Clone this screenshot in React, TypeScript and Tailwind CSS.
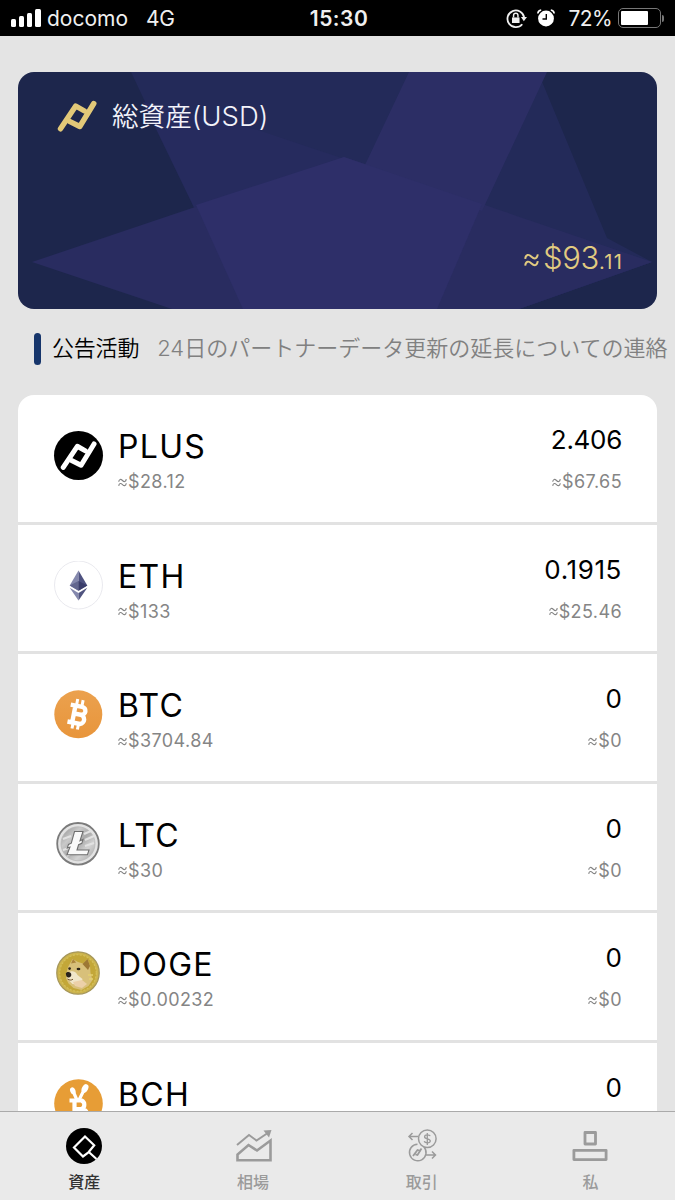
import type { ReactNode } from 'react';

function PlusMark({ className }: { className?: string }) {
  return (
    <svg viewBox="0 0 40 32" className={className} fill="none" stroke="currentColor" strokeWidth="5.4" strokeLinecap="round" strokeLinejoin="round">
      <path d="M3.500 28.300 18.700 5.500 27.500 10.500" />
      <path d="M36.800 3 22.800 26 12.500 20.800" />
    </svg>
  );
}

function PlusIcon() {
  return (
    <div className="w-[49px] h-[49px] rounded-full bg-black text-white flex items-center justify-center">
      <PlusMark className="w-[37px] h-[30px]" />
    </div>
  );
}

function EthIcon() {
  return (
    <svg viewBox="0 0 49 49" className="w-[49px] h-[49px]">
      <circle cx="24.5" cy="24" r="24" fill="#fff" stroke="#e3e3ea" strokeWidth="0.8" />
      <path d="M24.500 9.500 15.700 24.500l8.800 5.200z" fill="#8488ad" />
      <path d="M24.500 9.500 33.300 24.500l-8.800 5.200z" fill="#4e5280" />
      <path d="M24.500 20 15.700 24.500l8.800 5.200z" fill="#62668f" />
      <path d="M24.500 20 33.300 24.500l-8.800 5.200z" fill="#3a3d6b" />
      <path d="m15.700 26.700 8.800 5.200v7.600z" fill="#8488ad" />
      <path d="m33.300 26.700-8.800 5.200v7.600z" fill="#50547f" />
    </svg>
  );
}

function BtcIcon() {
  return (
    <svg viewBox="0 0 49 49" className="w-[49px] h-[49px]">
      <defs>
        <linearGradient id="btc" x1="0" y1="0" x2="0" y2="1">
          <stop offset="0" stopColor="#eba14e" />
          <stop offset="1" stopColor="#e8953b" />
        </linearGradient>
      </defs>
      <circle cx="24.300" cy="24.300" r="24" fill="url(#btc)" />
      <g transform="rotate(11 24.500 24.500)" fill="none" stroke="#fff">
        <path d="M15 16.300h11.700a4 4 0 0 1 0 8H19.500M26.500 24.300a4.700 4.700 0 0 1 1.200 9.200H15M19.800 16.300v17.200" strokeWidth="4.400" />
        <path d="M20.800 9.500v6M26.300 9.500v6M20.800 33.500v6M26.300 33.500v6" strokeWidth="3" />
      </g>
    </svg>
  );
}

function LtcIcon() {
  return (
    <svg viewBox="0 0 49 49" className="w-[49px] h-[49px]">
      <defs>
        <linearGradient id="ltc" x1="0" y1="0" x2="1" y2="1">
          <stop offset="0" stopColor="#8f8f8f" />
          <stop offset="0.3" stopColor="#c9c9c9" />
          <stop offset="0.5" stopColor="#a9a9a9" />
          <stop offset="0.7" stopColor="#d2d2d2" />
          <stop offset="1" stopColor="#a2a2a2" />
        </linearGradient>
      </defs>
      <circle cx="24" cy="23.800" r="20.800" fill="#e3e3e3" stroke="#7b7b7b" strokeWidth="1.800" />
      <circle cx="24" cy="23.800" r="17" fill="url(#ltc)" stroke="#b9b9b9" strokeWidth="0.800" />
      <path d="m30 14 7-3M31 20l9-4M31 26l9-3M9 19l8-3M9 30l6-2M13 36l5-3" stroke="#e2e2e2" strokeWidth="2" />
      <path d="M20.500 11.500h8.500l-3 9.200 3-1.200-1.200 3.800-3.200 1.400-1.600 5.300h12l-1.600 4.800H13l2.900-7.700-2.600 1 1.200-3.700 2.800-1.200z" fill="#f9f9f9" stroke="#6e6e6e" strokeWidth="1.100" />
    </svg>
  );
}

function DogeIcon() {
  return (
    <svg viewBox="0 0 49 49" className="w-[49px] h-[49px]">
      <circle cx="24" cy="24" r="21.200" fill="#cdb44c" stroke="#a6975a" strokeWidth="1.300" />
      <circle cx="24" cy="24" r="18.300" fill="#c3a738" stroke="#d4c05c" strokeWidth="1.200" strokeDasharray="2 1.500" />
      <path d="M14 18 18.500 10l5.500 3 5 1.500 4.500-4.500 2.500 7 .5 7 2 7-4 6-7 4-8-2-5-4.500-2.500-5 .5-6z" fill="#d8c07a" />
      <path d="m28.500 15 5-5 2.500 7-2 4z" fill="#9d7834" />
      <path d="m17 14.500 2-4.500 3.200 3.500z" fill="#ac863d" />
      <path d="M14 24c3-3 8-2 9.500 2l5 4-2 6-8-1-5-5z" fill="#f0e6c9" />
      <path d="m19 33 9-2 5 4-5 4-7-2z" fill="#ecd0a8" />
      <path d="M11.800 24.500c1.500-2.500 5.800-1.500 5.500 1.600-.2 3-3.800 3.200-5 1z" fill="#28221b" />
      <path d="M13.500 30c2 1.500 4 1.300 5.500.2" stroke="#72542d" fill="none" />
      <circle cx="15.600" cy="19.600" r="1.300" fill="#2e261a" />
      <ellipse cx="24.500" cy="20" rx="1.900" ry="1.300" fill="#2e261a" />
      <path d="M34 26h5M35 30h4" stroke="#e3d070" strokeWidth="1.400" />
    </svg>
  );
}

function BchIcon() {
  return (
    <svg viewBox="0 0 49 49" className="w-[49px] h-[49px]">
      <circle cx="24.500" cy="24.500" r="24.300" fill="#e79d36" />
      <path d="m22.500 20-3.500-8M25.500 20l5-10" stroke="#fff" strokeWidth="3.200" strokeLinecap="round" />
      <ellipse cx="18.800" cy="11.800" rx="2.600" ry="3.600" fill="#fff" transform="rotate(-22 18.800 11.800)" />
      <ellipse cx="31" cy="9.500" rx="3" ry="4.600" fill="#fff" transform="rotate(28 31 9.500)" />
      <path d="M15.500 21.500h12a4.600 4.600 0 0 1 0 8.500h-7M28 30a4.800 4.800 0 0 1 0 9.600H16M20.500 21.500v18" stroke="#fff" strokeWidth="4.200" fill="none" />
    </svg>
  );
}

type Coin = { name: string; amount: string; price?: string; value?: string; tracking?: string; icon: ReactNode };

const coins: Coin[] = [
  { name: 'PLUS', price: '$28.12', amount: '2.406', value: '$67.65', tracking: 'tracking-[-0.3px]', icon: <PlusIcon /> },
  { name: 'ETH', price: '$133', amount: '0.1915', value: '$25.46', tracking: 'tracking-[0.6px]', icon: <EthIcon /> },
  { name: 'BTC', price: '$3704.84', amount: '0', value: '$0', icon: <BtcIcon /> },
  { name: 'LTC', price: '$30', amount: '0', value: '$0', icon: <LtcIcon /> },
  { name: 'DOGE', price: '$0.00232', amount: '0', value: '$0', icon: <DogeIcon /> },
  { name: 'BCH', amount: '0', icon: <BchIcon /> },
];

const tabs = [
  {
    label: '資産',
    color: 'text-[#333333]',
    icon: (
      <svg viewBox="0 0 36 36" className="w-9 h-9">
        <circle cx="18" cy="18" r="18" fill="#000" />
        <path d="M30.500 31 22.500 23.800M22.800 24.200 17 28.500 8 19.500 19 8.500l9.200 8.800-5.700 6.900" fill="none" stroke="#fff" strokeWidth="2.200" />
      </svg>
    ),
  },
  {
    label: '相場',
    color: 'text-[#9b9b9b]',
    icon: (
      <svg viewBox="0 0 36 36" className="w-9 h-9 relative left-px" fill="none" stroke="currentColor">
        <path d="M1 17 13 7 20.500 12.500 32.500 4.500" strokeWidth="2" />
        <path d="m27.500 2.500 8-.5-2.500 7.500z" fill="currentColor" stroke="none" />
        <path d="M1.500 32.300V26.500L12.500 17l8.500 5.500L34.500 12.500v19.800z" strokeWidth="2.600" />
      </svg>
    ),
  },
  {
    label: '取引',
    color: 'text-[#9b9b9b]',
    icon: (
      <svg viewBox="0 0 36 36" className="w-9 h-9" fill="none" stroke="currentColor" strokeWidth="1.500">
        <circle cx="23.300" cy="10.800" r="8.800" />
        <path d="M14.500 8.500H5.500M8.500 5 5 8.500l3.500 3.500M13.500 16.200A8.300 8.300 0 1 0 20 19M21.500 27H31M28 23.500l3.500 3.500-3.500 3.500" />
        <path d="m9 28 4.500-6 3.500 1M17.500 20.500 13.500 27l-2-.7" strokeWidth="1.800" />
        <path d="M26.200 8.200c-.4-1.500-5.300-2-5.600.5-.2 2.800 5.800 1.500 5.700 4.300-.2 2.600-5.600 2.200-6 .2M23.300 5v12" strokeWidth="1.300" />
      </svg>
    ),
  },
  {
    label: '私',
    color: 'text-[#9b9b9b]',
    icon: (
      <svg viewBox="0 0 36 36" className="w-9 h-9 relative -left-px" fill="none" stroke="currentColor" strokeWidth="2.800" strokeLinejoin="round">
        <path d="M13 4.500h10.500v11.500H13zM1.900 22.300h32.200v9.300H1.900z" />
      </svg>
    ),
  },
];

// Drawn narrower and smaller than the digits that follow it
function Approx({ className = '' }: { className?: string }) {
  return (
    <svg viewBox="0 0 10 9" className={`inline-block ${className}`} fill="none" stroke="currentColor" strokeWidth="1.300">
      <path d="M.8 3.700C1.200.5 3.200.5 5 2.300s3.700 1.700 4.200-1.500M.8 8.200C1.200 5 3.200 5 5 6.800s3.700 1.700 4.200-1.500" />
    </svg>
  );
}

function StatusBar() {
  return (
    <header className="h-9 shrink-0 bg-black text-[#f0f0f0] grid grid-cols-[1fr_auto_1fr] items-center pl-[11px] pr-[11px] text-[21px] leading-none">
      <div className="flex items-center">
        <div className="flex items-end gap-[3px] h-[18px] mr-[6px]">
          <i className="w-[5px] h-2 rounded-[1.5px] bg-white" />
          <i className="w-[5px] h-[11px] rounded-[1.5px] bg-white" />
          <i className="w-[5px] h-[14px] rounded-[1.5px] bg-white" />
          <i className="w-[6px] h-[18px] rounded-[1.5px] bg-white" />
        </div>
        <span>docomo</span>
        <span className="ml-[18px] tracking-[-0.3px]">4G</span>
      </div>
      <span className="pl-[3px] font-semibold tracking-[0.5px]">15:30</span>
      <div className="flex items-center justify-end">
        <svg viewBox="0 0 20 20" className="w-[21px] h-[21px] mr-[10px]" fill="none" stroke="currentColor" strokeWidth="1.700">
          <path d="M15.500 15.500A8 8 0 1 1 17.300 9" />
          <path d="m14.200 8.500 5.800 0-3 4z" fill="currentColor" stroke="none" />
          <path d="M5.700 9h7.200v5.300H5.700z" fill="currentColor" stroke="none" />
          <path d="M7.200 9V7.200a2.100 2.100 0 0 1 4.200 0V9" strokeWidth="1.400" />
        </svg>
        <svg viewBox="0 0 18 18" className="w-[18px] h-[18px] mr-[13px]">
          <circle cx="9" cy="9.500" r="7.900" fill="#fff" />
          <path d="M9.300 5v5H5.500" fill="none" stroke="#000" strokeWidth="1.400" />
          <path d="M.8 4.500C1 2.500 2.200 1.300 4.200 1M17.200 4.500C17 2.500 15.800 1.300 13.800 1" fill="none" stroke="#fff" strokeWidth="1.600" />
        </svg>
        <span className="mr-[6px] tracking-[-0.6px]">72%</span>
        <div className="w-[43px] h-[20px] rounded-[5px] border-[1.5px] border-[#777] p-[2px]">
          <div className="w-[27px] h-full rounded-[1px] bg-white" />
        </div>
        <i className="w-[2px] h-[7px] ml-[1px] rounded-r bg-[#777]" />
      </div>
    </header>
  );
}

function AssetCard() {
  return (
    <section className="relative h-[237px] rounded-2xl overflow-hidden bg-[#1d264c] shrink-0">
      <svg viewBox="0 0 639 237" className="absolute inset-0 w-full h-full">
        <path d="M113 0H520L589 166 634 190 501 237H225z" fill="#232a59" />
        <path d="M125 30 240 58 634 190 501 237H225z" fill="#262b5e" />
        <path d="M14 190 326 85 634 190 501 237H154z" fill="#292c60" />
        <path d="M391 0H529L464 139 326 88 347 93z" fill="#2c2e65" />
        <path d="M178 133 326 85 464 132 419 237H225z" fill="#2e2f69" />
      </svg>
      <div className="relative flex items-center pl-[39px] pt-[24px] text-[#f3f3fa]">
        <PlusMark className="w-10 h-[33px] text-[#e2c878]" />
        <h1 className="ml-[15px] text-[26.6px] leading-[40px] font-[350] whitespace-nowrap">
          総資産<span className="text-[27.5px]">(USD)</span>
        </h1>
      </div>
      <div className="relative mt-[102px] pr-[34px] flex items-baseline justify-end text-[#e2cb80] leading-[40px]">
        <Approx className="w-[15px] h-[14px] mr-[4px] relative -top-[2px]" />
        <span className="text-[31px] font-light tracking-[-0.3px]">$93</span>
        <span className="text-[20px] tracking-[1.2px]">.11</span>
      </div>
    </section>
  );
}

function Quote({ text }: { text: string }) {
  return (
    <div className="mt-4 text-[18px] leading-[20px] tracking-[0.4px] text-[#858585] whitespace-nowrap">
      <Approx className="w-[9px] h-[9px] mr-px -mt-[2px]" />
      {text}
    </div>
  );
}

function CoinRow({ coin }: { coin: Coin }) {
  return (
    <li className="h-[129.5px] shrink-0 border-b-[3px] border-[#e2e2e2] pl-9 pr-[35px] flex">
      <div className="mt-9 mr-[15px]">{coin.icon}</div>
      <div className="flex-1 pt-[37px]">
        <div className="text-[32px] leading-[30px] tracking-[1.3px] mb-[-6px]">{coin.name}</div>
        {coin.price && <Quote text={coin.price} />}
      </div>
      <div className="text-right pt-[29px]">
        <div className={`text-[26px] leading-[32px] ${coin.tracking ?? ''}`}>{coin.amount}</div>
        {coin.value && <Quote text={coin.value} />}
      </div>
    </li>
  );
}

export default function App() {
  return (
    <div className="w-[675px] h-[1200px] overflow-hidden flex flex-col bg-[#e4e4e4] text-black font-['Inter','Noto_Sans_CJK_JP',sans-serif]">
      <StatusBar />

      <main className="flex-1 min-h-0 overflow-hidden flex flex-col px-[18px] pt-9">
        <AssetCard />

        {/* Notice */}
        <div className="h-[86px] shrink-0 -mr-[18px] pl-4 pb-[7px] flex items-center whitespace-nowrap text-[22px] font-[350]">
          <i className="w-[7px] h-8 rounded-full bg-[#16356b] mr-[11px]" />
          <span className="tracking-[-0.2px]">公告活動</span>
          <span className="ml-[18px] text-[#808080]">24日のパートナーデータ更新の延長についての連絡</span>
        </div>

        <ul className="bg-white rounded-t-2xl flex-1 min-h-0 overflow-hidden flex flex-col">
          {coins.map((coin) => (
            <CoinRow key={coin.name} coin={coin} />
          ))}
        </ul>
      </main>

      {/* Tab bar */}
      <nav className="h-[89px] shrink-0 bg-[#eaeaea] border-t border-[#aaaaaa] grid grid-cols-4">
        {tabs.map((tab) => (
          <div key={tab.label} className={`flex flex-col items-center pt-4 ${tab.color}`}>
            {tab.icon}
            <span className="mt-[8px] text-[16px] leading-[20px] font-medium">{tab.label}</span>
          </div>
        ))}
      </nav>
    </div>
  );
}
